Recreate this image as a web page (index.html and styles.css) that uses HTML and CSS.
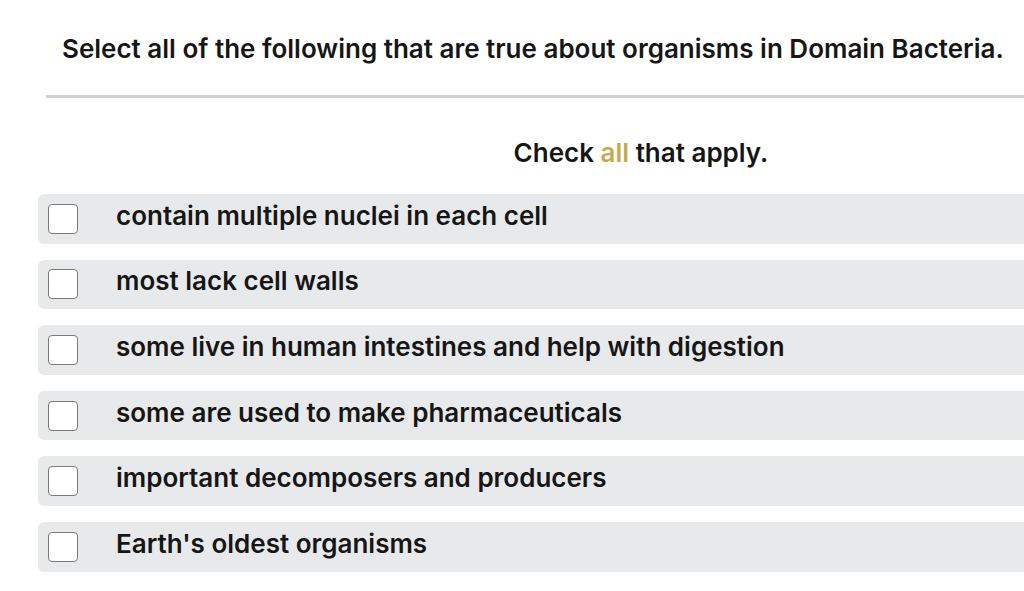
FILE: index.html
```html
<!DOCTYPE html>
<html>
<head>
<meta charset="utf-8">
<link rel="stylesheet" href="styles.css">
</head>
<body>
<div class="page">
  <h1 class="prompt">Select all of the following that are true about organisms in Domain Bacteria.</h1>
  <hr class="divider">
  <p class="instruction">Check <span class="accent">all</span> that apply.</p>
  <ul class="choices">
    <li class="choice"><span class="box"></span><span class="label">contain multiple nuclei in each cell</span></li>
    <li class="choice"><span class="box"></span><span class="label">most lack cell walls</span></li>
    <li class="choice"><span class="box"></span><span class="label">some live in human intestines and help with digestion</span></li>
    <li class="choice"><span class="box"></span><span class="label">some are used to make pharmaceuticals</span></li>
    <li class="choice"><span class="box"></span><span class="label">important decomposers and producers</span></li>
    <li class="choice"><span class="box"></span><span class="label">Earth's oldest organisms</span></li>
  </ul>
</div>
</body>
</html>
```
FILE: styles.css
```css
html, body {
  margin: 0;
  padding: 0;
  background: #ffffff;
  overflow: hidden;
}
.page {
  width: 1024px;
  height: 591px;
  font-family: "Inter", "Open Sans", sans-serif;
  color: #161616;
}
.prompt {
  margin: 0;
  padding: 33px 0 0 62px;
  font-size: 26px;
  font-weight: 600;
  line-height: 32px;
  white-space: nowrap;
}
.divider {
  margin: 30px 0 0 46px;
  border: 0;
  height: 3px;
  background: #d0d0d0;
}
.instruction {
  margin: 40px 0 0 0;
  padding-left: 258px;
  text-align: center;
  font-size: 26px;
  font-weight: 600;
  line-height: 30px;
}
.accent {
  color: #c9a74f;
}
.choices {
  list-style: none;
  margin: 26px 0 0 38px;
  padding: 0;
  display: flex;
  flex-direction: column;
  gap: 16px;
}
.choice {
  display: flex;
  align-items: center;
  height: 49.6px;
  background: #e8e9eb;
  border-radius: 6px 0 0 6px;
}
.box {
  width: 28px;
  height: 28px;
  margin-left: 10px;
  border: 1.5px solid #7a7a7a;
  border-radius: 4px;
  background: #ffffff;
  flex: none;
}
.label {
  margin-left: 38px;
  margin-bottom: 6px;
  font-size: 26px;
  font-weight: 600;
  line-height: 30px;
  white-space: nowrap;
}
```
